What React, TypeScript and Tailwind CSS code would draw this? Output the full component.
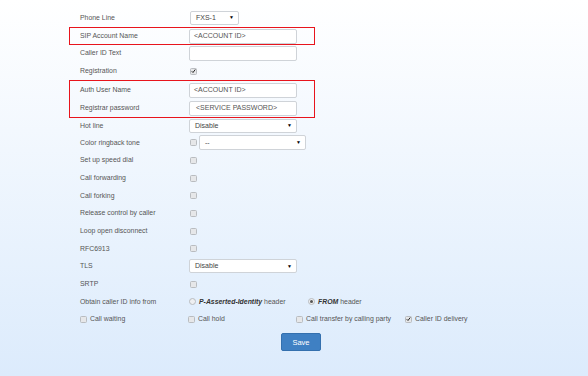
import React from "react";

const font = { fontFamily: '"Liberation Sans", Arial, sans-serif' };

function Box({ w, children, className = "" }: { w: string; children?: React.ReactNode; className?: string }) {
  return (
    <div
      className={`${w} h-[15px] bg-white border border-[#cfd3d8] rounded-[2px] flex items-center px-[4px] text-[7px] text-[#555] ${className}`}
    >
      {children}
    </div>
  );
}

function Select({ w, value, className = "" }: { w: string; value: string; className?: string }) {
  return (
    <div
      className={`${w} h-[14px] bg-white border border-[#cfd3d8] rounded-[2px] flex items-center justify-between pl-[5px] pr-[4px] text-[7px] text-[#444] ${className}`}
    >
      <span>{value}</span>
      <span className="text-[5px] text-black">▼</span>
    </div>
  );
}

function Check({ checked = false }: { checked?: boolean }) {
  return (
    <div className="w-[7px] h-[7px] rounded-[1.5px] border border-[#b9bcc0] bg-[#e6e7e9] flex items-center justify-center shrink-0">
      {checked && (
        <svg width="6" height="6" viewBox="0 0 10 10">
          <path d="M1.5 5.5 L4 8 L8.5 2" stroke="#222" strokeWidth="2" fill="none" />
        </svg>
      )}
    </div>
  );
}

function Radio({ checked = false }: { checked?: boolean }) {
  return (
    <div className="w-[7px] h-[7px] rounded-full border border-[#b9bcc0] bg-[#eeeff1] flex items-center justify-center shrink-0">
      {checked && <div className="w-[3px] h-[3px] rounded-full bg-[#555]" />}
    </div>
  );
}

function Row({ label, h = "h-[17.67px]", children }: { label: string; h?: string; children?: React.ReactNode }) {
  return (
    <div className={`flex items-center ${h}`}>
      <div className="w-[109px] text-[6.9px] text-[#555] shrink-0">{label}</div>
      <div className="flex items-center">{children}</div>
    </div>
  );
}

export default function App() {
  return (
    <div className="w-full h-[376px] bg-gradient-to-b from-white to-[#dcebfc] overflow-hidden" style={font}>
      <div className="pl-[80px] pt-[9px]">
        <Row label="Phone Line" h="h-[18px]">
          <Select w="w-[49px]" value="FXS-1" className="ml-[1px]" />
        </Row>
        <div className="ml-[-11px] w-[246px] border border-[#e8141c] pl-[10px]">
          <Row label="SIP Account Name" h="h-[16px]">
            <Box w="w-[108px]">&lt;ACCOUNT ID&gt;</Box>
          </Row>
        </div>
        <Row label="Caller ID Text" h="h-[17px]">
          <Box w="w-[108px]" />
        </Row>
        <Row label="Registration" h="h-[18px]">
          <div className="ml-[1px]">
            <Check checked />
          </div>
        </Row>
        <div className="ml-[-11px] w-[246px] border border-[#e8141c] pl-[10px]">
          <Row label="Auth User Name" h="h-[18px]">
            <Box w="w-[108px]">&lt;ACCOUNT ID&gt;</Box>
          </Row>
          <Row label="Registrar password" h="h-[18px]">
            <Box w="w-[108px]" className="pl-[6px]">&lt;SERVICE PASSWORD&gt;</Box>
          </Row>
        </div>
        <Row label="Hot line" h="h-[16px]">
          <Select w="w-[108px]" value="Disable" />
        </Row>
        <Row label="Color ringback tone">
          <div className="ml-[1px] flex items-center gap-[2px]">
            <Check />
            <Select w="w-[107px]" value="--" className="h-[15px]" />
          </div>
        </Row>
        {["Set up speed dial", "Call forwarding", "Call forking", "Release control by caller", "Loop open disconnect", "RFC6913"].map(
          (l) => (
            <Row key={l} label={l}>
              <div className="ml-[1px]">
                <Check />
              </div>
            </Row>
          )
        )}
        <Row label="TLS">
          <Select w="w-[108px]" value="Disable" />
        </Row>
        <Row label="SRTP">
          <div className="ml-[1px]">
            <Check />
          </div>
        </Row>
        <Row label="Obtain caller ID info from">
          <div className="flex items-center text-[6.9px] text-[#555]">
            <div className="w-[119px] flex items-center gap-[3px]">
              <Radio />
              <span>
                <b className="italic text-[#333]">P-Asserted-Identity</b> header
              </span>
            </div>
            <div className="flex items-center gap-[3px]">
              <Radio checked />
              <span>
                <b className="italic text-[#333]">FROM</b> header
              </span>
            </div>
          </div>
        </Row>
        <div className="flex items-center h-[17.67px] text-[6.9px] text-[#555]">
          {[
            ["Call waiting", false],
            ["Call hold", false],
            ["Call transfer by calling party", false],
            ["Caller ID delivery", true],
          ].map(([l, c], i) => (
            <div key={i} className={`flex items-center gap-[3px] ${i === 2 ? "w-[109px]" : "w-[108px]"}`}>
              <Check checked={c as boolean} />
              <span>{l as string}</span>
            </div>
          ))}
        </div>
        <div className="pl-[201px] pt-[5px]">
          <button className="w-[40px] h-[18px] bg-[#3f80c3] border border-[#3470ae] rounded-[2px] text-white text-[7.5px] flex items-center justify-center">
            Save
          </button>
        </div>
      </div>
    </div>
  );
}
